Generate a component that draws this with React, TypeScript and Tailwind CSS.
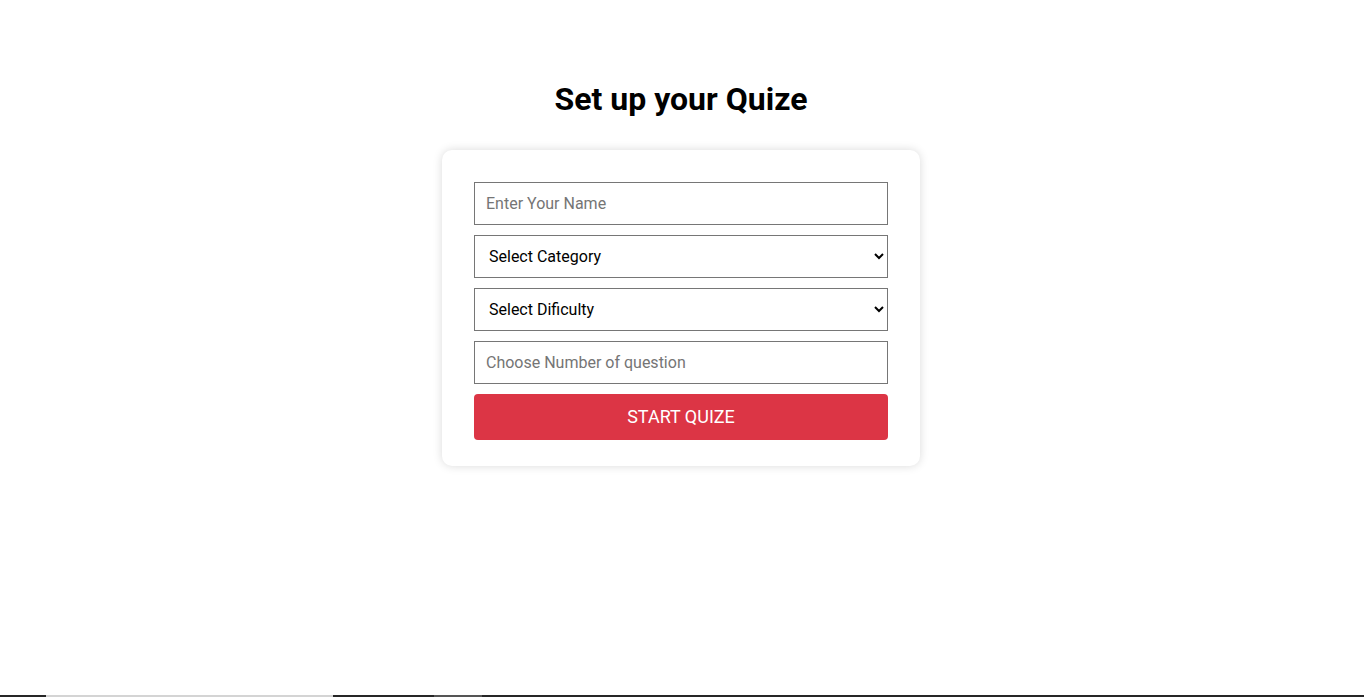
import React from 'react';

const App: React.FC = () => {
  return (
    <div className="relative min-h-screen bg-white font-['Roboto',sans-serif] text-black">
      <div className="flex flex-col items-center pt-[80px] pr-[2px]">
        <h1 className="h-[38px] text-[32px] font-bold leading-[38px] mb-[32px]">Set up your Quize</h1>

        <div className="w-[478px] rounded-[10px] bg-white px-[32px] pt-[32px] pb-[26px] shadow-[0_0_10px_rgba(0,0,0,0.15)]">
          <form className="flex flex-col gap-[10px]" onSubmit={e => e.preventDefault()}>
            <input
              type="text"
              placeholder="Enter Your Name"
              className="h-[43px] w-full border border-[#767676] px-[11px] text-[16px] placeholder:text-[#757575] outline-none"
            />
            <select className="h-[43px] w-full border border-[#767676] bg-white px-[10px] text-[16px] text-black">
              <option>Select Category</option>
            </select>
            <select className="h-[43px] w-full border border-[#767676] bg-white px-[10px] text-[16px] text-black">
              <option>Select Dificulty</option>
            </select>
            <input
              type="number"
              placeholder="Choose Number of question"
              className="h-[43px] w-full border border-[#767676] px-[11px] text-[16px] placeholder:text-[#757575] outline-none"
            />
            <button
              type="submit"
              className="h-[46px] w-full rounded-[4px] bg-[#dc3545] text-[18px] leading-[44px] uppercase text-white"
            >
              Start Quize
            </button>
          </form>
        </div>
      </div>

      {/* strip along the bottom edge */}
      <div className="fixed bottom-0 left-0 flex h-[2px] w-full bg-[#262626]">
        <div className="w-[46px]" />
        <div className="w-[287px] bg-[#d4d4d4]" />
        <div className="w-[101px]" />
        <div className="w-[48px] bg-[#555555]" />
      </div>
    </div>
  );
};

export default App;
